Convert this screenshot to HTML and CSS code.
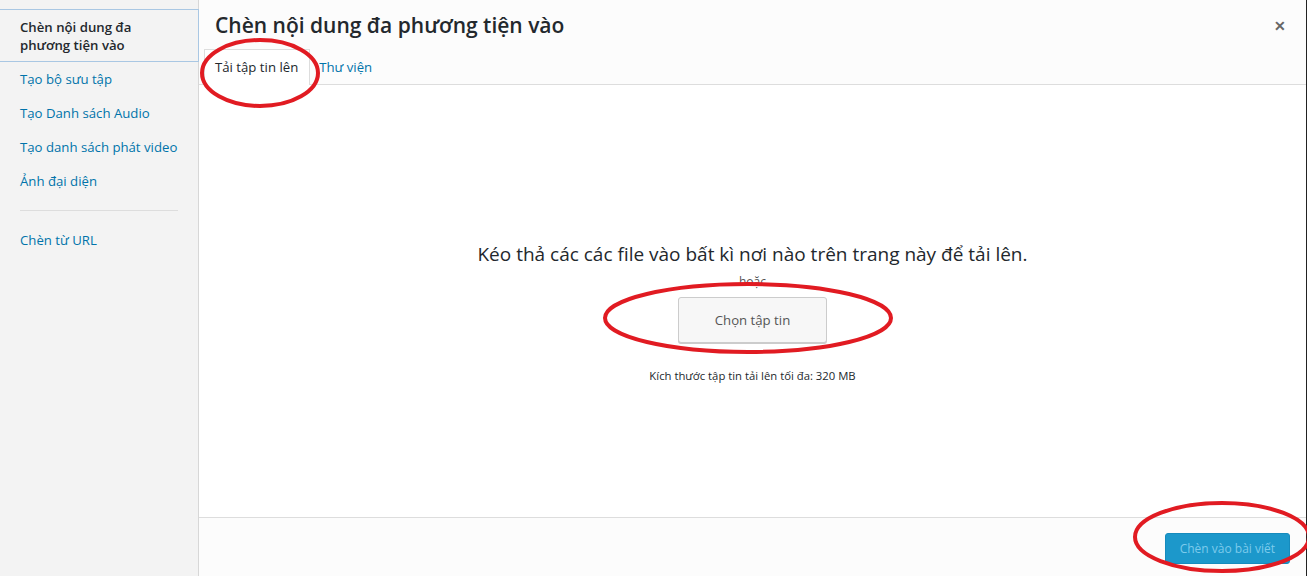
FILE: index.html
```html
<!DOCTYPE html>
<html lang="vi">
<head>
    <meta charset="UTF-8">
    <meta name="viewport" content="width=device-width, initial-scale=1.0">
    <title>Chèn nội dung đa phương tiện vào</title>
    <link rel="stylesheet" href="styles.css">
</head>
<body>
    <div class="frame">
        <div class="menu">
            <a class="menu-item active" href="#">Chèn nội dung đa phương tiện vào</a>
            <a class="menu-item" href="#">Tạo bộ sưu tập</a>
            <a class="menu-item" href="#">Tạo Danh sách Audio</a>
            <a class="menu-item" href="#">Tạo danh sách phát video</a>
            <a class="menu-item" href="#">Ảnh đại diện</a>
            <div class="separator"></div>
            <a class="menu-item" href="#">Chèn từ URL</a>
        </div>

        <div class="main">
            <div class="title-bar">
                <h1>Chèn nội dung đa phương tiện vào</h1>
                <button class="close">&#x2715;</button>
            </div>
            <div class="router">
                <a class="tab active" href="#">Tải tập tin lên</a>
                <a class="tab" href="#">Thư viện</a>
            </div>
            <div class="content">
                <p class="drop-text">Kéo thả các các file vào bất kì nơi nào trên trang này để tải lên.</p>
                <p class="or">hoặc</p>
                <button class="browse">Chọn tập tin</button>
                <p class="max-size">Kích thước tập tin tải lên tối đa: 320 MB</p>
            </div>
            <div class="toolbar">
                <button class="insert" disabled>Chèn vào bài viết</button>
            </div>
        </div>
    </div>

    <!-- red marks drawn on top of the screenshot -->
    <svg class="marks" width="1307" height="576" viewBox="0 0 1307 576">
        <ellipse cx="260" cy="73" rx="58" ry="33" />
        <ellipse cx="748" cy="318" rx="143" ry="34" />
        <ellipse cx="1222" cy="537" rx="87" ry="34" />
    </svg>
</body>
</html>
```

FILE: styles.css
```css
body {
    margin: 0;
    font-family: "Open Sans", "Noto Sans", sans-serif;
    color: #23282d;
    background: #fff;
    overflow: hidden;
}
.frame {
    display: flex;
    height: 576px;
}
.menu {
    width: 199px;
    flex-shrink: 0;
    background-color: #f3f3f3;
    border-right: 1px solid #d7d7d7;
    padding-top: 9px;
    box-sizing: border-box;
}
.menu-item {
    display: block;
    padding: 8px 20px;
    font-size: 13.2px;
    line-height: 18px;
    color: #0073aa;
    text-decoration: none;
}
.menu-item.active {
    color: #23282d;
    font-weight: 600;
    border: 1px solid #a9c7e3;
    border-left: none;
    margin-right: -1px;
    padding: 8px 20px 7px;
}
.separator {
    height: 1px;
    background-color: #ddd;
    margin: 12px 20px 12px;
}
.main {
    flex: 1;
    display: flex;
    flex-direction: column;
    border-right: 1px solid #222;
    background-color: #fff;
}
.title-bar {
    display: flex;
    justify-content: space-between;
    align-items: center;
    height: 50px;
    background-color: #fcfcfc;
}
.title-bar h1 {
    margin: 0;
    padding: 0 16px;
    font-size: 21px;
    font-weight: 600;
    line-height: 52px;
}
.close {
    background: none;
    border: none;
    color: #666;
    font-size: 14px;
    font-weight: bold;
    padding: 0 20px;
    margin-top: 2px;
    cursor: pointer;
}
.router {
    display: flex;
    height: 34px;
    padding: 0 0 0 5px;
    border-bottom: 1px solid #ddd;
    background-color: #fcfcfc;
}
.tab {
    padding: 8px 10px;
    margin-top: -1px;
    font-size: 13.2px;
    line-height: 18px;
    color: #0073aa;
    text-decoration: none;
    border: 1px solid transparent;
    border-bottom: none;
}
.tab.active {
    color: #23282d;
    background-color: #fff;
    border-color: #ddd;
    margin-bottom: -1px;
    padding-left: 10px;
    padding-right: 11px;
}
.tab + .tab {
    padding-left: 8px;
}
.content {
    flex: 1;
    display: flex;
    flex-direction: column;
    align-items: center;
    padding-top: 155px;
    box-sizing: border-box;
}
.drop-text {
    margin: 0;
    font-size: 19px;
    line-height: 28px;
}
.or {
    margin: 5px 0 0;
    font-size: 12px;
    line-height: 18px;
    color: #555;
}
.browse {
    margin-top: 6px;
    height: 46px;
    padding: 0 36px;
    font-family: inherit;
    font-size: 13.2px;
    color: #555;
    background-color: #f7f7f7;
    border: 1px solid #ccc;
    border-radius: 3px;
    box-shadow: 0 1px 0 #ccc;
    cursor: pointer;
}
.max-size {
    margin: 25px 0 0;
    font-size: 11.3px;
    line-height: 16px;
}
.toolbar {
    display: flex;
    justify-content: flex-end;
    height: 59px;
    padding: 15px 16px 0;
    box-sizing: border-box;
    border-top: 1px solid #ddd;
    background-color: #fcfcfc;
}
.insert {
    height: 31px;
    padding: 0 14px;
    font-family: inherit;
    font-size: 12px;
    color: #7ccbec;
    background-color: #1c98cb;
    border: 1px solid #168bbd;
    border-radius: 3px;
}
.marks {
    position: absolute;
    top: 0;
    left: 0;
    pointer-events: none;
}
.marks ellipse {
    fill: none;
    stroke: #e11b22;
    stroke-width: 4;
}
```
